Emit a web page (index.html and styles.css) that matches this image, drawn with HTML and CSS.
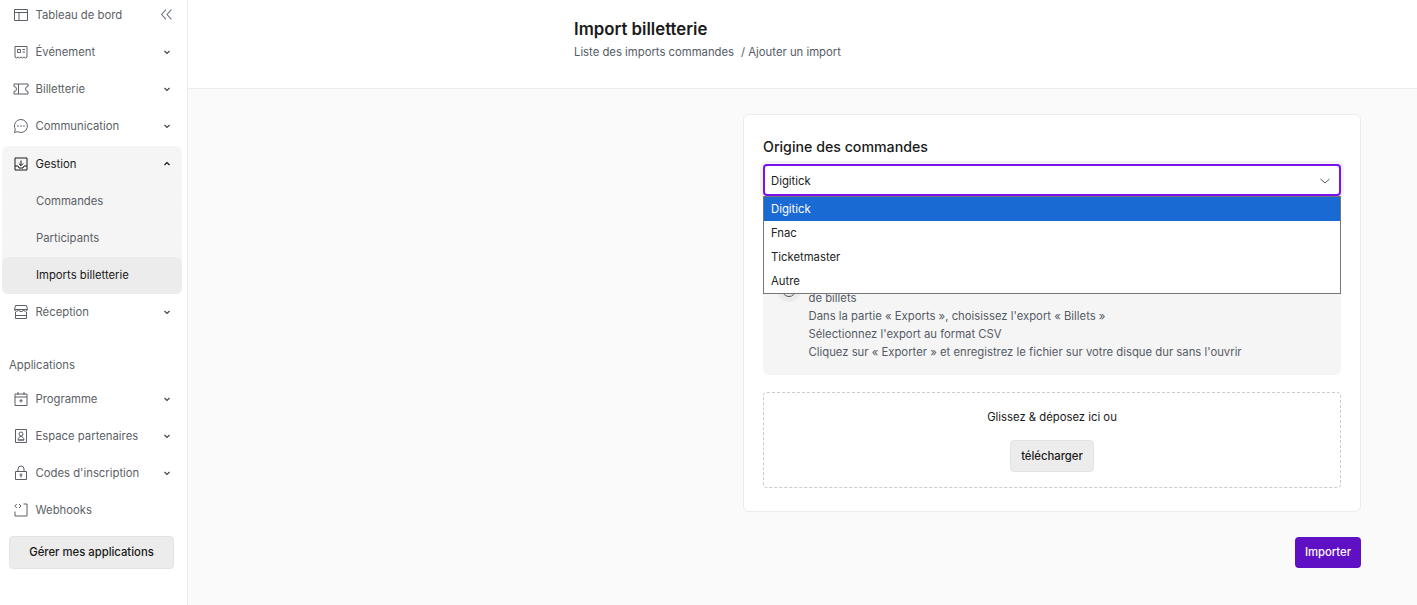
FILE: index.html
```html
<!DOCTYPE html>
<html lang="fr">
<head>
<meta charset="utf-8">
<title>Import billetterie</title>
<link rel="stylesheet" href="styles.css">
</head>
<body>
<div class="app">
  <aside class="sidebar">
    <nav class="nav top">
      <a class="item"><svg class="ico" viewBox="0 0 16 16"><path d="M1.500 2.500h13v11h-13zM1.500 5.500h13M6 5.500v8"/></svg><span class="lbl">Tableau de bord</span><svg class="collapse" viewBox="0 0 12 12"><path d="M5.500 1.500 1.500 6l4 4.500M10.500 1.500 6.500 6l4 4.500"/></svg></a>
      <a class="item"><svg class="ico" viewBox="0 0 16 16"><path d="M2 13V2.500h12V13l-1.500 1-1.500-1-1.500 1L8 13l-1.500 1L5 13l-1.500 1zM4.500 5.500h3v3h-3zM9.500 5.500h2.500M9.500 8h2.500"/></svg><span class="lbl">Événement</span><svg class="chev" viewBox="0 0 8 8"><path d="M1.500 3 4 5.500 6.500 3"/></svg></a>
      <a class="item"><svg class="ico" viewBox="0 0 16 16"><path d="M1 3h14v2.500a2.500 2.500 0 0 0 0 5V13H1v-2.500a2.500 2.500 0 0 0 0-5zM5.500 3v10"/></svg><span class="lbl">Billetterie</span><svg class="chev" viewBox="0 0 8 8"><path d="M1.500 3 4 5.500 6.500 3"/></svg></a>
      <a class="item"><svg class="ico" viewBox="0 0 16 16"><path d="M8 1.500a6.500 6.500 0 1 1-3.200 12.200L1.500 14.500l.8-3.300A6.500 6.500 0 0 1 8 1.500z"/><path class="dots" d="M5 8h.01M8 8h.01M11 8h.01"/></svg><span class="lbl">Communication</span><svg class="chev" viewBox="0 0 8 8"><path d="M1.500 3 4 5.500 6.500 3"/></svg></a>
      <div class="group">
        <a class="item open"><svg class="ico" viewBox="0 0 16 16"><path d="M2 2h12v12H2zM2 10h3l1 2h4l1-2h3M8 4.500v5M5.800 7.500 8 9.700l2.200-2.200"/></svg><span class="lbl">Gestion</span><svg class="chev" viewBox="0 0 8 8"><path d="M1.500 5 4 2.500 6.500 5"/></svg></a>
        <a class="sub">Commandes</a>
        <a class="sub">Participants</a>
        <a class="sub active">Imports billetterie</a>
      </div>
      <a class="item"><svg class="ico" viewBox="0 0 16 16"><path d="M2.500 1.500h11l1 4H1.500zM1.500 5.500a2.200 2.200 0 0 0 4.300 0 2.200 2.200 0 0 0 4.400 0 2.200 2.200 0 0 0 4.300 0M2.500 8V14.500h11V8M2.500 11.500h11"/></svg><span class="lbl">Réception</span><svg class="chev" viewBox="0 0 8 8"><path d="M1.500 3 4 5.500 6.500 3"/></svg></a>
    </nav>
    <div class="section">Applications</div>
    <nav class="nav">
      <a class="item"><svg class="ico" viewBox="0 0 16 16"><path d="M2 3h12v11.500H2zM2 6h12M5 1V4M11 1V4M8 8v3.500M6.300 9.800h3.400"/></svg><span class="lbl">Programme</span><svg class="chev" viewBox="0 0 8 8"><path d="M1.500 3 4 5.500 6.500 3"/></svg></a>
      <a class="item"><svg class="ico" viewBox="0 0 16 16"><path d="M2.500 1.500h11v13h-11zM8 4a2 2 0 1 1 0 4 2 2 0 0 1 0-4zM5 12c.3-2.500 1.500-3.500 3-3.500s2.700 1 3 3.500zM5 12h6"/></svg><span class="lbl">Espace partenaires</span><svg class="chev" viewBox="0 0 8 8"><path d="M1.500 3 4 5.500 6.500 3"/></svg></a>
      <a class="item"><svg class="ico" viewBox="0 0 16 16"><path d="M2.500 6.500h11v8h-11zM5 6.500V4a3 3 0 0 1 6 0v2.500M8 10.500v2"/><circle cx="8" cy="9.800" r="1"/></svg><span class="lbl">Codes d'inscription</span><svg class="chev" viewBox="0 0 8 8"><path d="M1.500 3 4 5.500 6.500 3"/></svg></a>
      <a class="item"><svg class="ico" viewBox="0 0 16 16"><path d="M10.500 2H14v12H2V9.500M3.800 2 1.800 4l2 2M6 2l2 2-2 2"/></svg><span class="lbl">Webhooks</span></a>
    </nav>
    <button class="manage" type="button">Gérer mes applications</button>
  </aside>
  <main class="main">
    <header class="head">
      <h1 class="title">Import billetterie</h1>
      <div class="crumbs"><span>Liste des imports commandes</span><span class="sep">/ Ajouter un import</span></div>
    </header>
    <section class="content">
      <div class="card">
        <h2 class="label">Origine des commandes</h2>
        <div class="selectwrap">
          <div class="select"><span>Digitick</span><svg class="selchev" viewBox="0 0 12 12"><path d="M1.500 4 6 8l4.500-4"/></svg></div>
          <ul class="options">
            <li class="selected">Digitick</li>
            <li>Fnac</li>
            <li>Ticketmaster</li>
            <li>Autre</li>
          </ul>
        </div>
        <div class="help">
          <div class="badge"><svg viewBox="0 0 16 16"><circle cx="8" cy="8" r="6.500"/><path d="M8 7.500v4M8 4.800h.01"/></svg></div>
          <div class="steps">
            <p>de billets</p>
            <p>Dans la partie « Exports », choisissez l'export « Billets »</p>
            <p>Sélectionnez l'export au format CSV</p>
            <p>Cliquez sur « Exporter » et enregistrez le fichier sur votre disque dur sans l'ouvrir</p>
          </div>
        </div>
        <div class="drop">
          <div class="droptext">Glissez &amp; déposez ici ou</div>
          <button class="upload" type="button">télécharger</button>
        </div>
      </div>
      <div class="actions"><button class="primary" type="button">Importer</button></div>
    </section>
  </main>
</div>
</body>
</html>
```
FILE: styles.css
```css
* { box-sizing: border-box; }
html, body { margin: 0; height: 100%; }
body { font-family: Inter, "Liberation Sans", sans-serif; font-size: 11.3px; color: #555b66; background: #fafafa; overflow: hidden; }
.app { display: flex; height: 605px; overflow: hidden; }
.sidebar { width: 188px; flex: none; background: #fff; border-right: 1px solid #ececec; padding: 0 5px 0 2px; }
.nav { display: flex; flex-direction: column; }
.top { margin-top: -3px; }
.item { display: flex; align-items: center; height: 37px; padding: 0 11px 0 11px; color: #5b5f66; }
.top > .item { padding-bottom: 2px; }
.ico { width: 16px; height: 16px; flex: none; fill: none; stroke: #5b5f66; stroke-width: 1; margin-right: 6.5px; }
.ico .dots { stroke-width: 1.6; stroke-linecap: round; }
.lbl { flex: 1; white-space: nowrap; }
.chev { width: 8px; height: 8px; fill: none; stroke: #444; stroke-width: 1.2; flex: none; }
.collapse { width: 13px; height: 13px; fill: none; stroke: #6b7280; stroke-width: 1; flex: none; margin-right: -2px; }
.group { margin-top: 1px; background: #f5f5f5; border-radius: 6px; }
.open { color: #1a1a1a; padding-bottom: 2px; }
.open .ico { stroke: #1a1a1a; }
.open .chev { stroke: #111; }
.sub { display: flex; align-items: center; height: 37px; padding: 0 0 1px 34px; border-radius: 6px; color: #5b5f66; background: #f5f5f5; }
.active { background: #ececec; color: #1a1a1a; }
.section { margin: 26px 0 0 7px; height: 16px; line-height: 16px; color: #5b5f66; }
.section + .nav { margin-top: 7px; }
.manage { display: block; width: 165px; height: 33px; margin: 8px 0 0 7px; padding: 0 0 1px; background: #ececec; border: 1px solid #e4e4e4; border-radius: 4px; font: 500 11.3px Inter, "Liberation Sans", sans-serif; color: #1a1a1a; }
.main { flex: 1; min-width: 0; display: flex; flex-direction: column; }
.head { height: 89px; background: #fff; border-bottom: 1px solid #ececec; padding: 19px 0 0 386px; }
.title { margin: 0; font-size: 16.8px; line-height: 20px; font-weight: 600; color: #1a1a1a; }
.crumbs { margin-top: 5px; line-height: 16px; color: #555b66; white-space: nowrap; }
.sep { margin-left: 7px; }
.content { padding: 25px 56px 0 555px; }
.card { height: 398px; background: #fff; border: 1px solid #ececec; border-radius: 6px; padding: 23px 19px 0; }
.label { margin: 0; font-size: 14.2px; line-height: 18px; font-weight: 500; color: #1a1a1a; }
.selectwrap { position: relative; margin-top: 8px; }
.select { display: flex; align-items: center; justify-content: space-between; height: 32px; background: #fff; border: 2px solid #7a10ee; border-radius: 4px; box-shadow: 0 0 0 3px #f3f3f5; padding: 1px 8px 0 6px; color: #1a1a1a; }
.selchev { width: 12px; height: 12px; fill: none; stroke: #555; stroke-width: 1; }
.options { position: absolute; z-index: 2; left: 0; right: 0; top: 32px; margin: 0; padding: 0; list-style: none; background: #fff; border: 1px solid #767676; height: 98px; }
.options li { height: 24px; line-height: 25px; padding-left: 7px; color: #222; }
.options .selected { background: #1a6ad4; color: #fff; }
.help { display: flex; height: 167px; margin-top: 12px; padding: 0 14px 14px; background: #f5f5f5; border-radius: 6px; align-items: flex-end; }
.badge { align-self: flex-start; width: 24px; height: 24px; margin: 70px 8px 0 0; border-radius: 50%; background: #ebebeb; display: flex; align-items: center; justify-content: center; flex: none; }
.badge svg { width: 16px; height: 16px; fill: none; stroke: #555; stroke-width: 1; }
.steps { margin-left: -0.5px; }
.steps p { margin: 0; height: 18px; line-height: 18px; white-space: nowrap; color: #555b66; }
.drop { height: 96px; margin-top: 17px; border: 1px dashed #ccc; border-radius: 4px; display: flex; flex-direction: column; align-items: center; padding-top: 16px; }
.droptext { line-height: 16px; color: #1a1a1a; }
.upload { width: 84px; height: 32px; margin-top: 15px; background: #ececec; border: 1px solid #e4e4e4; border-radius: 4px; font: 500 11.3px Inter, "Liberation Sans", sans-serif; color: #1a1a1a; }
.actions { display: flex; justify-content: flex-end; margin-top: 25px; }
.primary { width: 66px; height: 31px; padding: 0 0 2px; background: #6010c4; border: 0; border-radius: 4px; font: 500 11.3px Inter, "Liberation Sans", sans-serif; color: #fff; }
```
